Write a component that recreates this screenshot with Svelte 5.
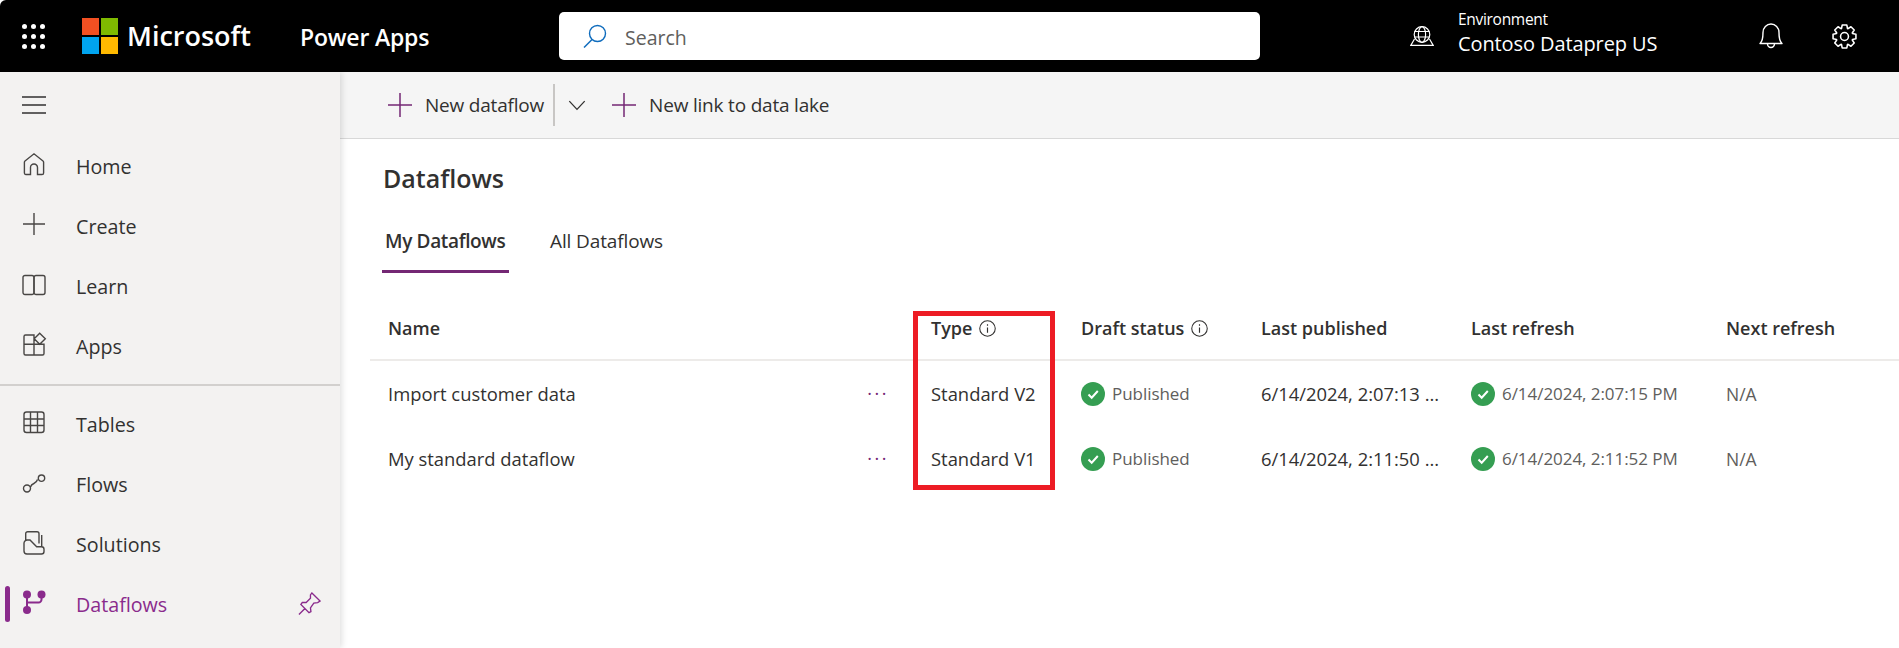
<script>
  const cog = (() => {
    const cx = 12, cy = 12, n = 8, R = 11.2, r = 8.2;
    let d = '';
    for (let i = 0; i < n; i++) {
      const a = (i * 2 * Math.PI) / n - Math.PI / 2;
      const w = 0.2, g = 0.36;
      const pts = [[r, a - g], [R, a - w], [R, a + w], [r, a + g]];
      for (const [rad, t] of pts) {
        d += (d ? 'L' : 'M') + (cx + rad * Math.cos(t)).toFixed(2) + ' ' + (cy + rad * Math.sin(t)).toFixed(2);
      }
    }
    return d + 'Z';
  })();

  const top = [
    { label: 'Home', d: 'M3.8 22.5H8.5V15.5a3.5 3.5 0 0 1 7 0V22.5H20a1.6 1.6 0 0 0 1.6-1.6V10.2a1.6 1.6 0 0 0-.6-1.2L12 1.8 3 9a1.6 1.6 0 0 0-.6 1.2V20.9a1.6 1.6 0 0 0 1.4 1.6Z' },
    { label: 'Create', d: 'M12 1V23M1 12H23' },
    { label: 'Learn', d: 'M3 3.500H10A1.800 1.800 0 0 1 11.800 5.300V20.700A1.800 1.800 0 0 1 10 22.500H3A2 2 0 0 1 1 20.500V5.500A2 2 0 0 1 3 3.500ZM14 3.500H21A2 2 0 0 1 23 5.500V20.500A2 2 0 0 1 21 22.500H14A1.800 1.800 0 0 1 12.200 20.700V5.300A1.800 1.800 0 0 1 14 3.500Z' },
    { label: 'Apps', d: 'M3.500 3H12V23H3.500A1.500 1.500 0 0 1 2 21.500V4.500A1.500 1.500 0 0 1 3.500 3ZM2 12.300H22M12 12.300H22V21.500A1.500 1.500 0 0 1 20.500 23H12M17.700 1.300L23.300 6.800 17.700 12.300 12.200 6.800Z' }
  ];
  const bottom = [
    { label: 'Tables', d: 'M4.500 2H19.500A2.500 2.500 0 0 1 22 4.500V20A2.500 2.500 0 0 1 19.500 22.500H4.500A2.500 2.500 0 0 1 2 20V4.500A2.500 2.500 0 0 1 4.500 2ZM2 9H22M2 15.500H22M8.500 2V22.500M15.500 2V22.500' },
    { label: 'Flows', d: 'M8.500 17C10 12 14 15 15.500 9.500M5 15A3.500 3.500 0 1 0 5 22 3.500 3.500 0 1 0 5 15ZM19.500 5A3.200 3.200 0 1 0 19.500 11.400 3.200 3.200 0 1 0 19.500 5Z' },
    { label: 'Solutions', d: 'M3.700 10V3.700A2 2 0 0 1 5.700 1.700H15A2 2 0 0 1 17 3.700V13.500M19.700 5V16.700M2 13.200A3.200 3.200 0 0 1 5.200 10H8L14.700 16.700H19.500A2.500 2.500 0 0 1 22 19.200V21.500A2.500 2.500 0 0 1 19.500 24H5A3 3 0 0 1 2 21Z' }
  ];
  const rows = [
    { name: 'Import customer data', type: 'Standard V2', pub: '6/14/2024, 2:07:13 ...', ref: '6/14/2024, 2:07:15 PM' },
    { name: 'My standard dataflow', type: 'Standard V1', pub: '6/14/2024, 2:11:50 ...', ref: '6/14/2024, 2:11:52 PM' }
  ];
</script>

{#snippet check()}
  <svg class="check" viewBox="0 0 24 24">
    <circle cx="12" cy="12" r="12" fill="#359e52" />
    <path d="M7.500 12.500L10.700 15.700 16.800 9" fill="none" stroke="#fff" stroke-width="2" />
  </svg>
{/snippet}

{#snippet info()}
  <svg class="info" viewBox="0 0 16 16">
    <circle cx="8" cy="8" r="7.300" fill="none" stroke="#323130" stroke-width="1" />
    <path d="M8 7V12M8 4V5.400" fill="none" stroke="#323130" stroke-width="1.100" />
  </svg>
{/snippet}

{#snippet plus()}
  <svg class="plus" viewBox="0 0 24 24"><path d="M12 0V24M0 12H24" /></svg>
{/snippet}

<div class="page">
  <header class="topbar">
    <div class="waffle" aria-hidden="true">
      {#each Array(9) as _}<i></i>{/each}
    </div>
    <svg class="logo" viewBox="0 0 36 36">
      <rect width="17" height="17" fill="#f25022" />
      <rect x="19" width="17" height="17" fill="#7fba00" />
      <rect y="19" width="17" height="17" fill="#00a4ef" />
      <rect x="19" y="19" width="17" height="17" fill="#ffb900" />
    </svg>
    <span class="brand">Microsoft</span>
    <span class="app">Power Apps</span>
    <div class="search">
      <svg class="searchicon" viewBox="0 0 24 24">
        <circle cx="14.500" cy="9.500" r="8" fill="none" stroke="#0f6cbd" stroke-width="1.400" />
        <path d="M9 15.500L1 23.500" fill="none" stroke="#0f6cbd" stroke-width="1.500" />
      </svg>
      <span>Search</span>
    </div>
    <svg class="env" viewBox="0 0 24 20" fill="none" stroke="#fff" stroke-width="1.200">
      <circle cx="12" cy="8.500" r="7.800" />
      <ellipse cx="12" cy="8.500" rx="3.600" ry="7.800" />
      <path d="M4.500 5.500H19.500M4.500 11H19.500M4.500 13L.8 19.400H23.200L19.500 13" />
    </svg>
    <div class="envtext">
      <span class="envlabel">Environment</span>
      <span class="envname">Contoso Dataprep US</span>
    </div>
    <svg class="bell" viewBox="0 0 24 26" fill="none" stroke="#fff" stroke-width="1.400" stroke-linejoin="round">
      <path d="M1 20.500C3.500 18.500 4 15 4 9.500A8 8.500 0 0 1 20 9.500C20 15 20.500 18.500 23 20.500ZM8.500 21A3.500 3.500 0 0 0 15.500 21" />
    </svg>
    <svg class="gear" viewBox="0 0 24 24" fill="none" stroke="#fff" stroke-width="1.500" stroke-linejoin="round">
      <path d={cog} />
      <circle cx="12" cy="12" r="3.800" />
    </svg>
  </header>

  <div class="body">
    <nav class="side">
      <svg class="burger" viewBox="0 0 24 18"><path d="M0 1H24M0 9H24M0 17H24" /></svg>
      <ul class="group first">
        {#each top as item}
          <li>
            <svg class="ico" viewBox="0 0 24 24"><path d={item.d} /></svg>
            {item.label}
          </li>
        {/each}
      </ul>
      <div class="rule"></div>
      <ul class="group">
        {#each bottom as item}
          <li>
            <svg class="ico" viewBox="0 0 24 24"><path d={item.d} /></svg>
            {item.label}
          </li>
        {/each}
        <li class="active">
          <svg class="ico" viewBox="0 0 24 24">
            <circle cx="5" cy="4.500" r="4" class="solid" />
            <circle cx="19.500" cy="4.500" r="4" class="solid" />
            <circle cx="5" cy="20" r="4" class="solid" />
            <path d="M5 6V18M5 12.500H16.500A3 3 0 0 0 19.500 9.500V6" />
          </svg>
          Dataflows
          <svg class="pin" viewBox="0 0 24 24">
            <path d="M14.500 1L23 9.500 20.500 11 16.500 11.500 13 16.500 13.500 20.500 11.500 21.500 3 13 4.500 11 8.500 11 13 6.500 13 3ZM7.500 17L1 23.500" />
          </svg>
        </li>
      </ul>
    </nav>

    <main class="main">
      <div class="toolbar">
        <button class="cmd">{@render plus()}New dataflow</button>
        <span class="sep"></span>
        <svg class="chev" viewBox="0 0 16 10"><path d="M1 1L8 8.500 15 1" /></svg>
        <button class="cmd second">{@render plus()}New link to data lake</button>
      </div>

      <div class="content">
        <h1>Dataflows</h1>
        <div class="tabs">
          <span class="tab on">My Dataflows</span>
          <span class="tab">All Dataflows</span>
        </div>

        <div class="table">
          <div class="row head">
            <div>Name</div>
            <div class="withinfo">Type {@render info()}</div>
            <div class="withinfo">Draft status {@render info()}</div>
            <div>Last published</div>
            <div>Last refresh</div>
            <div>Next refresh</div>
          </div>
          {#each rows as r}
            <div class="row">
              <div class="namecell"><span>{r.name}</span><span class="dots">···</span></div>
              <div>{r.type}</div>
              <div class="status">{@render check()}Published</div>
              <div>{r.pub}</div>
              <div class="status">{@render check()}{r.ref}</div>
              <div class="muted">N/A</div>
            </div>
          {/each}
          <div class="highlight"></div>
        </div>
      </div>
    </main>
  </div>
</div>

<style>
  :global(body) { margin: 0; background: #fff; overflow: hidden; }
  * { box-sizing: border-box; }
  .page {
    width: 1899px; height: 648px; display: flex; flex-direction: column; overflow: hidden;
    font-family: "Open Sans", "Noto Sans", sans-serif; color: #323130;
  }
  .topbar {
    height: 72px; flex: none; background: #000; color: #fff; display: flex; align-items: center;
    border-top-left-radius: 6px;
  }
  .waffle { display: grid; grid-template-columns: repeat(3, 4px); gap: 5px; margin-left: 22px; }
  .waffle i { width: 5px; height: 5px; border-radius: 50%; background: #fff; }
  .logo { width: 36px; height: 36px; margin-left: 38px; }
  .brand { font-size: 27px; font-weight: 600; margin-left: 9px; width: 127px; padding-bottom: 2px; }
  .app { font-size: 23px; font-weight: 600; letter-spacing: -0.2px; margin-left: 46px; width: 259px; padding-top: 2px; }
  .search {
    width: 701px; height: 48px; background: #fff; border-radius: 5px; display: flex; align-items: center;
    padding-left: 24px; color: #605e5c; font-size: 19.500px;
  }
  .search span { padding-top: 2px; }
  .searchicon { width: 24px; height: 24px; margin-right: 18px; }
  .env { width: 24px; height: 20px; margin-left: 150px; }
  .envtext { display: flex; flex-direction: column; margin-left: 24px; width: 301px; padding-bottom: 2px; }
  .envlabel { font-size: 15.500px; line-height: 21px; letter-spacing: -0.3px; margin-top: -4px; }
  .envname { font-size: 20px; line-height: 27px; letter-spacing: -0.1px; }
  .bell { width: 24px; height: 26px; }
  .gear { width: 25px; height: 25px; margin-left: 49px; }

  .body { flex: 1; display: flex; min-height: 0; }
  .side {
    width: 340px; flex: none; background: #f3f2f1; box-shadow: 2px 0 6px rgba(0, 0, 0, .12);
    position: relative; z-index: 1; padding-top: 24px;
  }
  .burger { display: block; width: 24px; height: 18px; margin-left: 22px; fill: none; stroke: #323130; stroke-width: 1.300; }
  .group { list-style: none; margin: 0; padding: 0; }
  .first { margin-top: 22px; }
  .group li {
    height: 60px; display: flex; align-items: center; gap: 30px; padding-left: 22px; font-size: 19.700px; position: relative;
  }
  .ico { width: 24px; height: 24px; fill: none; stroke: #484644; stroke-width: 1.400; flex: none; margin-bottom: 4px; overflow: visible; }
  .rule { height: 2px; background: #d2d0ce; margin-top: 8px; margin-bottom: 8px; }
  .active { color: #8a2b8c; }
  .active .ico { stroke: #8a2b8c; stroke-width: 2; }
  .active .solid { fill: #8a2b8c; stroke: none; }
  .active::before {
    content: ""; position: absolute; left: 5px; top: 12px; width: 5px; height: 36px; border-radius: 3px; background: #8a2b8c;
  }
  .pin { position: absolute; left: 298px; top: 18px; width: 23px; height: 23px; fill: none; stroke: #8a2b8c; stroke-width: 1.400; }

  .main { flex: 1; min-width: 0; }
  .toolbar {
    height: 67px; background: #f5f5f5; border-bottom: 1px solid #d8d8d8; display: flex; align-items: center; padding-left: 48px;
  }
  .cmd {
    display: flex; align-items: center; gap: 13px; padding: 0; border: 0; background: none; color: #323130;
    font: inherit; font-size: 19px; letter-spacing: -0.2px;
  }
  .plus { width: 24px; height: 24px; fill: none; stroke: #742774; stroke-width: 1.500; }
  .sep { width: 2px; height: 42px; background: #c8c6c4; margin-left: 9px; }
  .chev { width: 18px; height: 11px; margin-left: 13px; fill: none; stroke: #323130; stroke-width: 1.200; }
  .second { margin-left: 26px; }

  .content { padding: 0 0 0 30px; }
  h1 { margin: 21px 0 0 13px; font-size: 25px; line-height: 36px; font-weight: 600; }
  .tabs { display: flex; margin: 30px 0 0 12px; height: 48px; gap: 38px; }
  .tab { font-size: 19px; letter-spacing: -0.12px; padding: 0 3px; line-height: 30px; height: 47px; }
  .tab.on { font-weight: 600; border-bottom: 3px solid #742774; letter-spacing: -0.35px; width: 127px; white-space: nowrap; }

  .table { position: relative; margin-top: 34px; }
  .row {
    display: grid; grid-template-columns: 543px 150px 180px 210px 255px 1fr; align-items: center;
    height: 65px; padding-left: 18px; font-size: 18.400px; color: #323130;
  }
  .row.head { height: 53px; border-bottom: 2px solid #edebe9; font-weight: 600; padding-bottom: 11px; font-size: 18px; }
  .row > div { white-space: nowrap; }
  .namecell { display: flex; justify-content: space-between; padding-right: 42px; }
  .dots { color: #742774; letter-spacing: 2.500px; font-size: 18px; }
  .withinfo { display: flex; align-items: center; gap: 7px; }
  .info { width: 17px; height: 17px; }
  .status { display: flex; align-items: center; gap: 7px; color: #605e5c; font-size: 17px; letter-spacing: -0.05px; }
  .check { width: 24px; height: 24px; flex: none; }
  .muted { color: #605e5c; font-size: 17.500px; }
  .highlight {
    position: absolute; left: 543px; top: 3px; width: 142px; height: 179px; border: 5px solid #ed1c24; pointer-events: none;
  }
</style>
